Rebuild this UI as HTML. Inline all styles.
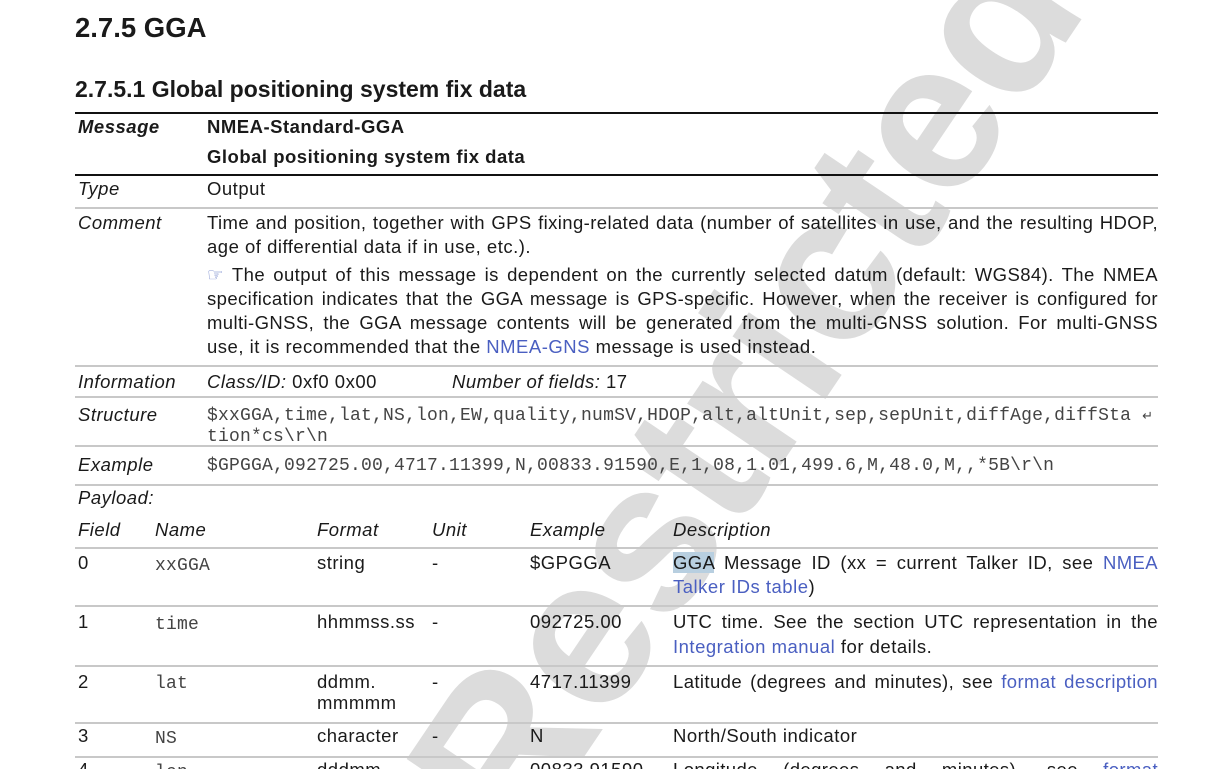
<!DOCTYPE html>
<html><head><meta charset="utf-8"><style>
html,body{margin:0;width:1205px;height:769px;overflow:hidden;}
body{background:#fff;position:relative;font-family:"Liberation Sans",sans-serif;color:#1a1a1a;}
.a{position:absolute;white-space:nowrap;font-size:18.5px;letter-spacing:0.5px;line-height:24px;}
.i{font-style:italic}
.b{font-weight:bold}
.m{font-family:"Liberation Mono",monospace;font-size:18px;letter-spacing:0.2px;color:#444}
.l{color:#4a5fc1}
.hl{position:absolute;left:75px;width:1083px;height:2px;background:#c8c8c8}
.bl{position:absolute;left:75px;width:1083px;height:2px;background:#111}
.j{position:absolute;left:207px;width:951px;font-size:18.5px;letter-spacing:0.4px;line-height:24px;text-align:justify;text-align-last:justify;white-space:nowrap}
.wm{position:absolute;left:235px;top:268px;font:bold 212px "Liberation Sans",sans-serif;color:#dcdcdc;transform:rotate(-56deg);transform-origin:center;white-space:nowrap;z-index:0;letter-spacing:-2px}
.t{position:relative;z-index:1}
</style></head><body>
<div class="wm">Restricted</div>
<div class="t">
<div class="a b" style="left:75px;top:12px;font-size:27.5px;letter-spacing:0;line-height:32px">2.7.5 GGA</div>
<div class="a b" style="left:75px;top:75px;font-size:23px;letter-spacing:0;line-height:28px">2.7.5.1 Global positioning system fix data</div>
<div class="bl" style="top:112px"></div>
<div class="a i b" style="left:78px;top:115px">Message</div>
<div class="a b" style="left:207px;top:115px">NMEA-Standard-GGA</div>
<div class="a b" style="left:207px;top:145px">Global positioning system fix data</div>
<div class="bl" style="top:174px"></div>
<div class="a i" style="left:78px;top:177px">Type</div>
<div class="a" style="left:207px;top:177px">Output</div>
<div class="hl" style="top:207px"></div>
<div class="a i" style="left:78px;top:211px">Comment</div>
<div class="j" style="top:211px">Time and position, together with GPS fixing-related data (number of satellites in use, and the resulting HDOP,</div>
<div class="a" style="left:207px;top:235px">age of differential data if in use, etc.).</div>
<div class="j" style="top:263px"><span style="color:#6b7fc8">☞</span> The output of this message is dependent on the currently selected datum (default: WGS84). The NMEA</div>
<div class="j" style="top:287px">specification indicates that the GGA message is GPS-specific. However, when the receiver is configured for</div>
<div class="j" style="top:311px">multi-GNSS, the GGA message contents will be generated from the multi-GNSS solution. For multi-GNSS</div>
<div class="a" style="left:207px;top:335px">use, it is recommended that the <span class="l">NMEA-GNS</span> message is used instead.</div>
<div class="hl" style="top:365px"></div>
<div class="a i" style="left:78px;top:370px">Information</div>
<div class="a" style="left:207px;top:370px"><i>Class/ID:</i> 0xf0 0x00</div>
<div class="a" style="left:452px;top:370px"><i>Number of fields:</i> 17</div>
<div class="hl" style="top:396px"></div>
<div class="a i" style="left:78px;top:403px">Structure</div>
<div class="a m" style="left:207px;top:404px">$xxGGA,time,lat,NS,lon,EW,quality,numSV,HDOP,alt,altUnit,sep,sepUnit,diffAge,diffSta <span style="font-size:13px">↵</span></div>
<div class="a m" style="left:207px;top:425px">tion*cs\r\n</div>
<div class="hl" style="top:445px"></div>
<div class="a i" style="left:78px;top:453px">Example</div>
<div class="a m" style="left:207px;top:454px">$GPGGA,092725.00,4717.11399,N,00833.91590,E,1,08,1.01,499.6,M,48.0,M,,*5B\r\n</div>
<div class="hl" style="top:484px"></div>
<div class="a i" style="left:78px;top:486px">Payload:</div>
<div class="a i" style="left:78px;top:518px">Field</div>
<div class="a i" style="left:155px;top:518px">Name</div>
<div class="a i" style="left:317px;top:518px">Format</div>
<div class="a i" style="left:432px;top:518px">Unit</div>
<div class="a i" style="left:530px;top:518px">Example</div>
<div class="a i" style="left:673px;top:518px">Description</div>
<div class="hl" style="top:547px"></div>
<div class="a" style="left:78px;top:551px">0</div>
<div class="a m" style="left:155px;top:554px">xxGGA</div>
<div class="a" style="left:317px;top:551px">string</div>
<div class="a" style="left:432px;top:551px">-</div>
<div class="a" style="left:530px;top:551px">$GPGGA</div>
<div class="j" style="left:673px;width:485px;top:551px"><span style="background:#b8cfe0">GGA</span> Message ID (xx = current Talker ID, see <span class="l">NMEA</span></div>
<div class="a" style="left:673px;top:575px"><span class="l">Talker IDs table</span>)</div>
<div class="hl" style="top:605px"></div>
<div class="a" style="left:78px;top:610px">1</div>
<div class="a m" style="left:155px;top:613px">time</div>
<div class="a" style="left:317px;top:610px">hhmmss.ss</div>
<div class="a" style="left:432px;top:610px">-</div>
<div class="a" style="left:530px;top:610px">092725.00</div>
<div class="j" style="left:673px;width:485px;top:610px">UTC time. See the section UTC representation in the</div>
<div class="a" style="left:673px;top:635px"><span class="l">Integration manual</span> for details.</div>
<div class="hl" style="top:665px"></div>
<div class="a" style="left:78px;top:670px">2</div>
<div class="a m" style="left:155px;top:672px">lat</div>
<div class="a" style="left:317px;top:670px">ddmm.</div>
<div class="a" style="left:317px;top:691px">mmmmm</div>
<div class="a" style="left:432px;top:670px">-</div>
<div class="a" style="left:530px;top:670px">4717.11399</div>
<div class="j" style="left:673px;width:485px;top:670px">Latitude (degrees and minutes), see <span class="l">format description</span></div>
<div class="hl" style="top:722px"></div>
<div class="a" style="left:78px;top:724px">3</div>
<div class="a m" style="left:155px;top:727px">NS</div>
<div class="a" style="left:317px;top:724px">character</div>
<div class="a" style="left:432px;top:724px">-</div>
<div class="a" style="left:530px;top:724px">N</div>
<div class="a" style="left:673px;top:724px">North/South indicator</div>
<div class="hl" style="top:756px"></div>
<div class="a" style="left:78px;top:758px">4</div>
<div class="a m" style="left:155px;top:761px">lon</div>
<div class="a" style="left:317px;top:758px">dddmm.</div>
<div class="a" style="left:432px;top:758px">-</div>
<div class="a" style="left:530px;top:758px">00833.91590</div>
<div class="j" style="left:673px;width:485px;top:758px">Longitude (degrees and minutes), see <span class="l">format</span></div>
</div>
</body></html>
